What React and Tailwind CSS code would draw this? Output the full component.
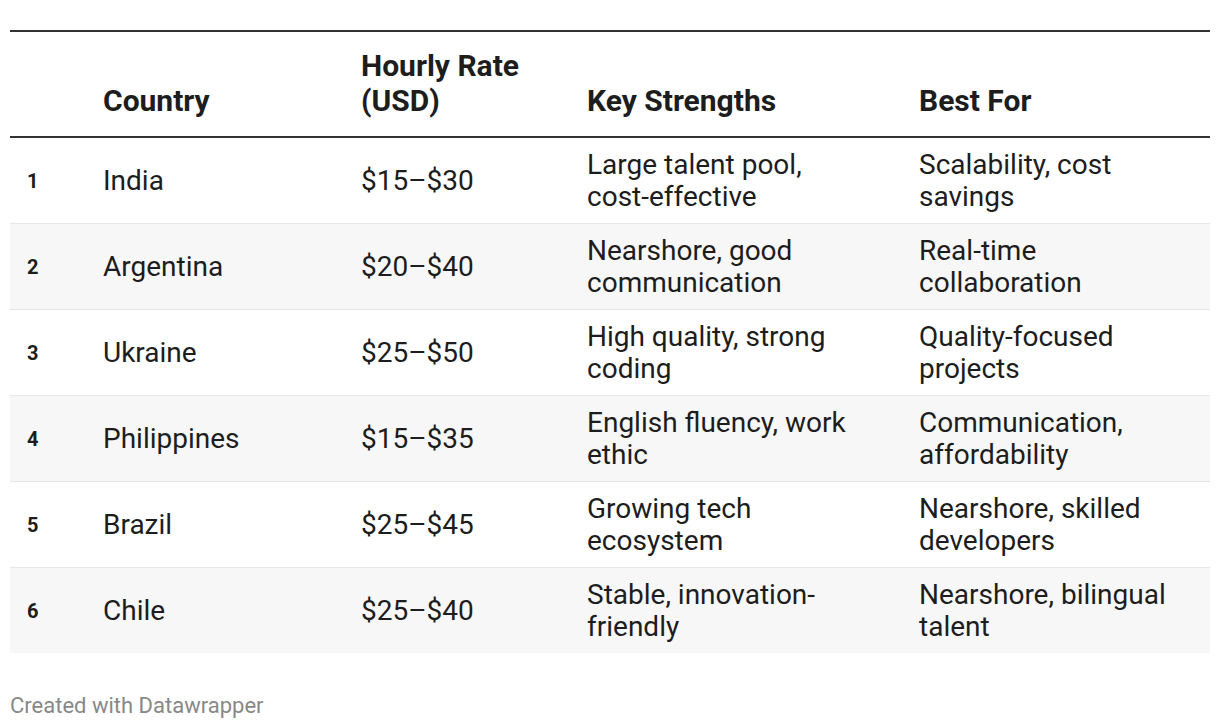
const rows = [
  ['1', 'India', '$15–$30', 'Large talent pool, cost-effective', 'Scalability, cost savings'],
  ['2', 'Argentina', '$20–$40', 'Nearshore, good communication', 'Real-time collaboration'],
  ['3', 'Ukraine', '$25–$50', 'High quality, strong coding', 'Quality-focused projects'],
  ['4', 'Philippines', '$15–$35', 'English fluency, work ethic', 'Communication, affordability'],
  ['5', 'Brazil', '$25–$45', 'Growing tech ecosystem', 'Nearshore, skilled developers'],
  ['6', 'Chile', '$25–$40', 'Stable, innovation-friendly', 'Nearshore, bilingual talent'],
];

export default function App() {
  return (
    <div className="w-[1220px] h-[728px] bg-white px-[10px] pt-[30px] text-[#1d1d1d]" style={{ fontFamily: 'Roboto, "Liberation Sans", sans-serif' }}>
      <table className="w-[1200px] table-fixed border-collapse">
        <colgroup>
          <col className="w-[93px]" />
          <col className="w-[258px]" />
          <col className="w-[226px]" />
          <col className="w-[332px]" />
          <col className="w-[291px]" />
        </colgroup>
        <thead>
          <tr className="border-t-2 border-b-2 border-[#333333]">
            <th />
            <th className="text-left align-bottom font-bold text-[30px] leading-[35px] pt-[16px] pb-[18px]">Country</th>
            <th className="text-left align-bottom font-bold text-[30px] leading-[35px] pt-[16px] pb-[18px]">Hourly Rate (USD)</th>
            <th className="text-left align-bottom font-bold text-[30px] leading-[35px] pt-[16px] pb-[18px]">Key Strengths</th>
            <th className="text-left align-bottom font-bold text-[30px] leading-[35px] pt-[16px] pb-[18px]">Best For</th>
          </tr>
        </thead>
        <tbody>
          {rows.map((r, i) => (
            <tr key={r[0]} className={`${i % 2 ? 'bg-[#f7f7f7]' : 'bg-white'} ${i < rows.length - 1 ? 'border-b border-[#e6e6e6]' : ''}`}>
              <td className="pl-[17px] font-bold text-[20px] align-middle">{r[0]}</td>
              <td className="text-[28px] leading-[32px] pt-[11px] pb-[10px] align-middle">{r[1]}</td>
              <td className="text-[28px] leading-[32px] pt-[11px] pb-[10px] align-middle">{r[2]}</td>
              <td className="text-[28px] leading-[32px] pt-[11px] pb-[10px] pr-[62px] align-middle">{r[3]}</td>
              <td className="text-[28px] leading-[32px] pt-[11px] pb-[10px] pr-[26px] align-middle">{r[4]}</td>
            </tr>
          ))}
        </tbody>
      </table>
      <div className="mt-[40px] text-[22px] leading-[26px] text-[#888888]">Created with Datawrapper</div>
    </div>
  );
}
